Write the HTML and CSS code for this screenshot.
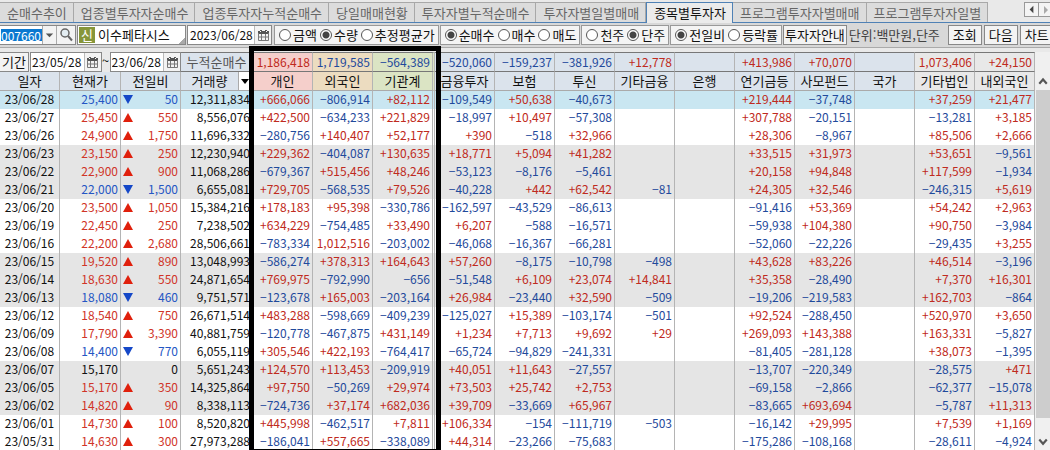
FILE: index.html
```html
<!DOCTYPE html>
<html lang="ko">
<head>
<meta charset="utf-8">
<title>종목별투자자</title>
<link rel="stylesheet" href="styles.css">
</head>
<body>
<svg class="defs" aria-hidden="true">
  <symbol id="calendar" viewBox="0 0 11 11"><path fill="#555" d="M0 1h2V0h2v1h3V0h2v1h2v3H0z"/><path fill="#fff" d="M2 1h1v1H2zM8 1h1v1H8z"/><path fill="none" stroke="#777" d="M.5 3v7.500h10V3M.5 7h10M3.500 4v6M7.500 4v6"/></symbol>
</svg>
<nav class="tabs">
  <button class="tab">순매수추이</button>
  <button class="tab">업종별투자자순매수</button>
  <button class="tab">업종투자자누적순매수</button>
  <button class="tab">당일매매현황</button>
  <button class="tab">투자자별누적순매수</button>
  <button class="tab">투자자별일별매매</button>
  <button class="tab active">종목별투자자</button>
  <button class="tab">프로그램투자자별매매</button>
  <button class="tab">프로그램투자자일별</button>
  <span class="tab-scroll">
    <button aria-label="이전 탭"><svg viewBox="0 0 14 14"><path fill="#444" d="M9 3v8L5 7z"/></svg></button>
    <button aria-label="다음 탭"><svg viewBox="0 0 14 14"><path fill="#aaa" d="M5 3v8l4-4z"/></svg></button>
  </span>
</nav>
<form class="toolbar">
  <span class="code">
    <input class="code-input" type="text" value="007660" aria-label="종목코드">
    <button type="button" class="mini drop" aria-label="종목 목록"><svg viewBox="0 0 14 18"><path fill="#555" d="M3 7h8l-4 4z"/></svg></button>
    <button type="button" class="mini find" aria-label="종목 검색"><svg viewBox="0 0 18 18"><circle cx="8" cy="7" r="4" fill="#e3edf2" stroke="#666" stroke-width="1.500"/><path stroke="#666" stroke-width="2" d="M11 10l4 4.500"/></svg></button>
  </span>
  <span class="stock"><span class="badge">신</span>이수페타시스</span>
  <span class="date main-date"><input type="text" value="2023/06/28" aria-label="기준일"><button type="button" aria-label="달력"><svg><use href="#calendar"/></svg></button></span>
  <span class="group">
    <label><input type="radio" name="unit">금액</label>
    <label><input type="radio" name="unit" checked>수량</label>
    <label><input type="radio" name="unit">추정평균가</label>
  </span>
  <span class="group">
    <label><input type="radio" name="side" checked>순매수</label>
    <label><input type="radio" name="side">매수</label>
    <label><input type="radio" name="side">매도</label>
  </span>
  <span class="group">
    <label><input type="radio" name="share">천주</label>
    <label><input type="radio" name="share" checked>단주</label>
  </span>
  <span class="group">
    <label><input type="radio" name="diff" checked>전일비</label>
    <label><input type="radio" name="diff">등락률</label>
  </span>
  <button type="button" class="btn guide">투자자안내</button>
  <span class="unit">단위:백만원,단주</span>
  <button type="button" class="btn">조회</button>
  <button type="button" class="btn">다음</button>
  <button type="button" class="btn">차트</button>
</form>
<main class="content">
  <table class="grid">
    <colgroup>
      <col class="w60"><col class="w61"><col class="w60"><col class="w72">
      <col class="w60"><col class="w60"><col class="w62"><col class="w60">
      <col class="w60"><col class="w60"><col class="w60"><col class="w60">
      <col class="w60"><col class="w60"><col class="w60"><col class="w60"><col class="w60">
    </colgroup>
    <thead>
      <tr class="summary">
        <td colspan="3" class="period-cell">
          <div class="period">
            <button type="button" class="btn term">기간</button>
            <span class="date"><input type="text" value="23/05/28" aria-label="시작일"><button type="button" aria-label="달력"><svg><use href="#calendar"/></svg></button></span>
            <span class="tilde">~</span>
            <span class="date"><input type="text" value="23/06/28" aria-label="종료일"><button type="button" aria-label="달력"><svg><use href="#calendar"/></svg></button></span>
          </div>
        </td>
        <th scope="row" class="total">누적순매수</th>
        <td class="pink up">1,186,418</td><td class="tan down">1,719,585</td><td class="green down double">−564,389</td>
        <td class="down">−520,060</td><td class="down">−159,237</td><td class="down">−381,926</td><td class="up">+12,778</td><td></td>
        <td class="up">+413,986</td><td class="up">+70,070</td><td></td><td class="pale up">1,073,406</td><td class="pale up">+24,150</td>
      </tr>
      <tr class="heads">
        <th>일자</th><th>현재가</th><th>전일비</th>
        <th class="volume"><div><span>거래량</span><button type="button" aria-label="항목 선택"><svg viewBox="0 0 12 18"><path d="M2 7h8l-4 5z"/></svg></button></div></th>
        <th class="pink">개인</th><th class="tan">외국인</th><th class="green double">기관계</th>
        <th>금융투자</th><th>보험</th><th>투신</th><th>기타금융</th><th>은행</th>
        <th>연기금등</th><th>사모펀드</th><th>국가</th><th class="pale">기타법인</th><th class="pale">내외국인</th>
      </tr>
    </thead>
    <tbody id="rows"></tbody>
  </table>
  <div class="scroll">
    <button aria-label="위로"><svg viewBox="0 0 14 18"><path d="M4 11l3.500-4 3.500 4" fill="none" stroke="#555" stroke-width="2"/></svg></button>
    <div class="thumb"></div>
    <button class="end" aria-label="아래로"><svg viewBox="0 0 14 18"><path d="M4 7l3.500 4 3.500-4" fill="none" stroke="#555" stroke-width="2"/></svg></button>
  </div>
  <div class="highlight"></div>
</main>
<script src="app.js"></script>
</body>
</html>
```
FILE: styles.css
```css
* { box-sizing: border-box; }

body {
  margin: 0;
  height: 100vh;
  overflow: hidden;
  display: flex;
  flex-direction: column;
  background: #e9e9e9;
  color: #111;
  font: 13px/18px "Noto Sans CJK KR", sans-serif;
}

button, input {
  font: inherit;
  color: inherit;
  margin: 0;
  padding: 0;
  border: 0;
  border-radius: 0;
}

svg { display: block; }
.defs { position: absolute; width: 0; height: 0; }

/* tabs */
.tabs {
  display: flex;
  flex: none;
  height: 23px;
  padding-top: 2px;
  border-bottom: 1px solid #4f81b5;
}
.tab {
  flex: none;
  height: 20px;
  padding: 0 6px 0 7px;
  background: #dcdcdc;
  border-top: 1px solid #a8a8a8;
  border-right: 1px solid #a8a8a8;
  color: #666;
  line-height: 18px;
  white-space: nowrap;
}
.tab.active {
  height: 21px;
  background: #ebebeb;
  border: 1px solid #4f81b5;
  border-bottom: 0;
  margin-bottom: -1px;
  color: #111;
}
.tab-scroll {
  display: flex;
  flex: none;
  margin-left: auto;
  margin-right: -4px;
  height: 15px;
}
.tab-scroll button {
  width: 15px;
  border: 1px solid #999;
  background: #f4f4f4;
}
.tab-scroll button + button { border-left: 0; }

/* toolbar */
.toolbar {
  display: flex;
  flex: none;
  gap: 1px;
  height: 25px;
  padding: 2px 0;
  background: #d8d8d8;
  border-bottom: 1px solid #aaa;
  white-space: nowrap;
}
.toolbar > * { height: 20px; flex: none; }
.code {
  display: flex;
  width: 76px;
  border: 1px solid #888;
  border-left: 0;
  background: #fff;
}
.code-input {
  width: 41px;
  height: 12px;
  margin: 3px 0 3px 1px;
  background: #0a78d0;
  color: #fff;
  line-height: 12px;
}
.mini { background: #f3f3f3; border-left: 1px solid #aaa; }
.drop { width: 14px; }
.find { width: 19px; }
.stock {
  display: flex;
  gap: 3px;
  width: 109px;
  padding: 1px;
  border: 1px solid #888;
  background: linear-gradient(135deg, #fff 95%, #aaa 95%);
  line-height: 16px;
}
.badge { width: 16px; background: #87963a; color: #fff; text-align: center; }
.date { display: flex; border: 1px solid #888; background: #fff; }
.date input { flex: 1; width: 100%; min-width: 0; padding-left: 2px; background: #fff; }
.date input, .code-input, .grid tbody, .grid .summary td {
  font-size: 12px;
}
.date button {
  display: grid;
  flex: none;
  place-items: center;
  width: 17px;
  background: #f3f3f3;
  border-left: 1px solid #bbb;
}
.date svg { width: 11px; height: 11px; }
.main-date { width: 85px; margin-right: 1px; }
.group {
  display: flex;
  gap: 3px;
  padding: 0 3px 0 4px;
  border: 1px solid #999;
  background: #f4f4f4;
}
.group label { display: flex; align-items: center; gap: 2px; }
.group input {
  appearance: none;
  width: 12px;
  height: 12px;
  border: 1px solid #555;
  border-radius: 50%;
  background: #fff;
}
.group input:checked { background: radial-gradient(circle, #444 3px, #fff 4px); }
.btn {
  min-width: 34px;
  padding: 0 1px;
  border: 1px solid #888;
  background: #f3f3f3;
  line-height: 18px;
}
.toolbar .btn { margin-right: 1px; }
.unit { width: 98px; color: #444; line-height: 19px; }

/* investor grid */
.content {
  position: relative;
  display: flex;
  flex: 1;
  min-height: 0;
  padding-top: 4px;
}
.grid {
  flex: 1;
  width: 0;
  height: max-content;
  table-layout: fixed;
  border-collapse: separate;
  border-spacing: 0;
  background: #fff;
}
.w60 { width: 60px; }
.w61 { width: 61px; }
.w62 { width: 62px; }
.w72 { width: 72px; }
.grid th, .grid td {
  height: 18px;
  padding: 0 2px 0 0;
  border-right: 1px solid #b4b4b4;
  line-height: 18px;
  text-align: right;
  vertical-align: middle;
  white-space: nowrap;
}
.grid th { padding: 0; font-weight: 400; text-align: center; background: #dbe3ec; }
.grid tbody td { padding-bottom: 2px; line-height: 16px; }
.grid .summary th, .grid .summary td {
  height: 20px;
  border-top: 1px solid #777;
  border-bottom: 1px solid #777;
  background: #dbe3ec;
}
.grid .heads th { height: 19px; border-bottom: 1px solid #aaa; }
.grid .summary .total { color: #555; }
.grid .double { border-right: 3px double #b4b4b4; }
.grid thead tr .pink { background: #f5cfcb; }
.grid thead tr .tan { background: #ecdcc0; }
.grid thead tr .green { background: #dbe4c4; }
.grid thead tr .pale { background: #e8e8e8; }
.grid .summary .period-cell { padding: 0; border: 0; background: #e9e9e9; }
.period { display: flex; height: 20px; font-size: 13px; }
.period .btn { flex: none; width: 29px; min-width: 0; padding: 0; margin-right: 1px; border-left: 0; }
.period .date { flex: 1; min-width: 0; }
.period .date input { padding-left: 1px; }
.tilde { flex: none; width: 8px; text-align: center; }
.volume div { display: flex; height: 18px; }
.volume span { flex: 1; }
.volume button { width: 14px; background: #fff; border-left: 1px solid #aaa; }
.volume svg { width: 12px; height: 18px; }
.grid tbody tr:first-child td { background: #c9e6f1; }
.grid .band td { background: #e5e5e5; }
.grid tbody td:first-child { text-align: center; padding: 0 0 2px; }
.up { color: #bf2a20; }
.down { color: #1f4a9c; }
.price.up { color: #d03428; }
.price.down { color: #2456c4; }
.change { display: flex; align-items: center; justify-content: space-between; padding-left: 2px; }
.change svg { width: 10px; height: 9px; }

.scroll {
  display: flex;
  flex-direction: column;
  flex: none;
  width: 15px;
  padding-top: 20px;
  background: #f0f0f0;
}
.scroll button { height: 18px; background: #f0f0f0; }
.scroll .end { height: 32px; padding-top: 14px; }
.thumb { flex: 1; background: #cdcdcd; margin-left: 1px; }

.highlight {
  position: absolute;
  top: -2px;
  bottom: -4px;
  left: 249px;
  width: 192px;
  border: 5px solid #000;
  pointer-events: none;
}
```
FILE: app.js
```js
// date | price | direction + change | volume | investor columns, left to right
const data = `
23/06/28|25,400|v50|12,311,834|+666,066|-806,914|+82,112|-109,549|+50,638|-40,673|||+219,444|-37,748||+37,259|+21,477
23/06/27|25,450|^550|8,556,076|+422,500|-634,233|+221,829|-18,997|+10,497|-57,308|||+307,788|-20,151||-13,281|+3,185
23/06/26|24,900|^1,750|11,696,332|-280,756|+140,407|+52,177|+390|-518|+32,966|||+28,306|-8,967||+85,506|+2,666
23/06/23|23,150|^250|12,230,940|+229,362|-404,087|+130,635|+18,771|+5,094|+41,282|||+33,515|+31,973||+53,651|-9,561
23/06/22|22,900|^900|11,068,286|-679,367|+515,456|+48,246|-53,123|-8,176|-5,461|||+20,158|+94,848||+117,599|-1,934
23/06/21|22,000|v1,500|6,655,081|+729,705|-568,535|+79,526|-40,228|+442|+62,542|-81||+24,305|+32,546||-246,315|+5,619
23/06/20|23,500|^1,050|15,384,216|+178,183|+95,398|-330,786|-162,597|-43,529|-86,613|||-91,416|+53,369||+54,242|+2,963
23/06/19|22,450|^250|7,238,502|+634,229|-754,485|+33,490|+6,207|-588|-16,571|||-59,938|+104,380||+90,750|-3,984
23/06/16|22,200|^2,680|28,506,661|-783,334|1,012,516|-203,002|-46,068|-16,367|-66,281|||-52,060|-22,226||-29,435|+3,255
23/06/15|19,520|^890|13,048,993|-586,274|+378,313|+164,643|+57,260|-8,175|-10,798|-498||+43,628|+83,226||+46,514|-3,196
23/06/14|18,630|^550|24,871,654|+769,975|-792,990|-656|-51,548|+6,109|+23,074|+14,841||+35,358|-28,490||+7,370|+16,301
23/06/13|18,080|v460|9,751,571|-123,678|+165,003|-203,164|+26,984|-23,440|+32,590|-509||-19,206|-219,583||+162,703|-864
23/06/12|18,540|^750|26,671,514|+483,288|-598,669|-409,239|-125,027|+15,389|-103,174|-501||+92,524|-288,450||+520,970|+3,650
23/06/09|17,790|^3,390|40,881,759|-120,778|-467,875|+431,149|+1,234|+7,713|+9,692|+29||+269,093|+143,388||+163,331|-5,827
23/06/08|14,400|v770|6,055,119|+305,546|+422,193|-764,417|-65,724|-94,829|-241,331|||-81,405|-281,128||+38,073|-1,395
23/06/07|15,170|=0|5,651,243|+124,570|+113,453|-209,919|+40,051|+11,643|-27,557|||-13,707|-220,349||-28,575|+471
23/06/05|15,170|^350|14,325,864|+97,750|-50,269|+29,974|+73,503|+25,742|+2,753|||-69,158|-2,866||-62,377|-15,078
23/06/02|14,820|^90|8,338,113|-724,736|+37,174|+682,036|+39,709|-33,669|+65,967|||-83,665|+693,694||-5,787|+11,313
23/06/01|14,730|^100|8,520,820|+445,998|-462,517|+7,811|+106,334|-154|-111,719|-503||-16,142|+29,995||+7,539|+1,169
23/05/31|14,630|^300|27,973,288|-186,041|+557,665|-338,089|+44,314|-23,266|-75,683|||-175,286|-108,168||-28,611|-4,924`;

const trends = { '^': 'up', v: 'down', '=': '' };
const arrows = {
  '^': '<svg viewBox="0 0 10 9"><path fill="#e0200c" d="M5 0l5 9H0z"/></svg>',
  v: '<svg viewBox="0 0 10 9"><path fill="#1548c8" d="M0 0h10L5 9z"/></svg>',
  '=': '<span></span>'
};

const html = data.trim().split('\n').map((line, index) => {
  const [date, price, move, volume, ...investors] = line.split('|');
  const trend = trends[move[0]];
  const cells = investors.map((value, i) => {
    const color = value ? (value[0] === '-' ? 'down' : 'up') : '';
    const edge = i === 2 ? ' double' : '';
    return `<td class="${color}${edge}">${value.replace('-', '−')}</td>`;
  }).join('');
  const band = Math.floor(index / 3) % 2 ? ' class="band"' : '';
  return `<tr${band}><td>${date}</td><td class="price ${trend}">${price}</td>` +
    `<td class="price ${trend}"><div class="change">${arrows[move[0]]}${move.slice(1)}</div></td>` +
    `<td>${volume}</td>${cells}</tr>`;
}).join('');

document.getElementById('rows').innerHTML = html;
```
